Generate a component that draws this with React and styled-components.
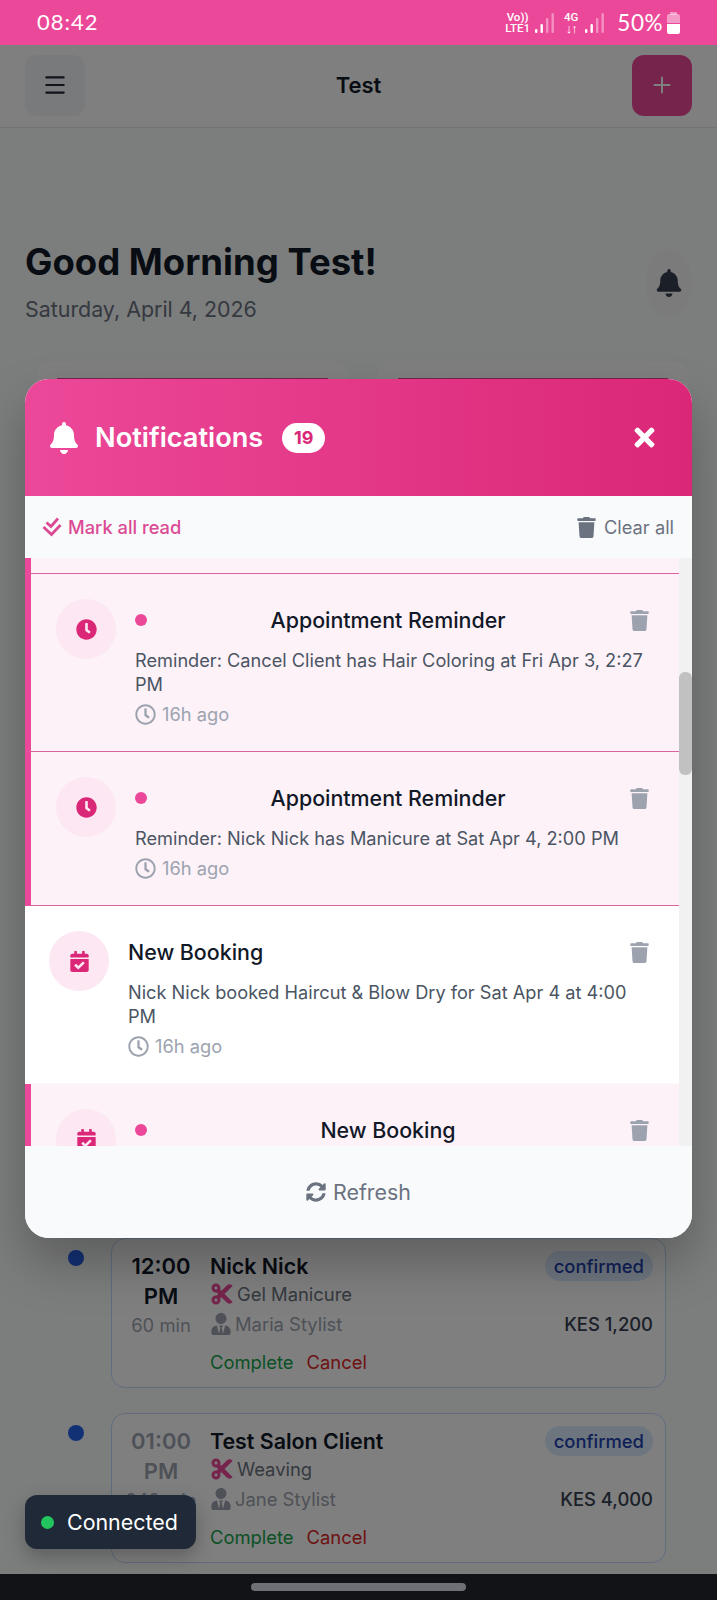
import React from "react";
import styled, { createGlobalStyle } from "styled-components";
import {
  FaBell, FaTimes, FaTrash, FaClock, FaRegClock,
  FaCalendarCheck, FaSyncAlt, FaCut, FaUserTie,
} from "react-icons/fa";
import { Menu, Plus } from "lucide-react";

const Global = createGlobalStyle`
  html, body { margin: 0; padding: 0; background: #fff; }
  * { box-sizing: border-box; }
  body { font-family: Inter, "Liberation Sans", sans-serif; }
`;

const Screen = styled.div`
  width: 717px; height: 1600px; display: flex; flex-direction: column; overflow: hidden;
`;
const StatusBar = styled.div`
  height: 45px; flex: none; background: #ec4899; color: #fff; display: flex;
  align-items: center; justify-content: space-between; padding: 0 36px 0 37px;
`;
const Clock = styled.span`
  font-family: Lato, sans-serif; font-size: 22px; font-weight: 400; letter-spacing: 1px;
  position: relative; top: -1px;
`;
const StatusRight = styled.div`display: flex; align-items: center;`;
const Stack = styled.div`
  display: flex; flex-direction: column; align-items: center; font-family: Roboto, sans-serif;
  font-weight: 500; font-size: 11.5px; line-height: 11px;
  margin: 0 ${(p) => p.$mr}px 0 ${(p) => p.$ml}px;
`;
const Arrows = styled.span`font-size: 13px; line-height: 11px; font-weight: 700; letter-spacing: -1px;`;
const Percent = styled.span`
  font-family: Lato, sans-serif; font-size: 22.5px; margin: 0 3px 0 12px; letter-spacing: .5px;
`;
const Viewport = styled.div`position: relative; flex: 1; overflow: hidden; background: #f9fafb;`;
const TopBar = styled.header`
  height: 83px; display: flex; align-items: center; justify-content: space-between;
  padding: 0 25px 2px; border-bottom: 1px solid #e5e7eb; background: #fff;
`;
const MenuButton = styled.div`
  width: 60px; height: 61px; border-radius: 12px; background: #f3f4f6; color: #1f2937;
  display: flex; align-items: center; justify-content: center;
`;
const AddButton = styled(MenuButton)`background: #ec4899; color: #fff;`;
const TopTitle = styled.div`font-size: 22px; font-weight: 600; color: #111827;`;
const Main = styled.main`padding: 112px 25px 0;`;
const Greeting = styled.section`display: flex; justify-content: space-between; align-items: center;`;
const Heading = styled.h1`margin: 0 0 13px; font-size: 36.5px; line-height: 44px; font-weight: 700; color: #111827;`;
const DateLine = styled.div`font-size: 21.4px; line-height: 24px; color: #6b7280;`;
const BellButton = styled.div`
  width: 46px; height: 68px; border-radius: 50%; background: #f6f7f8; color: #374151;
  display: flex; align-items: center; justify-content: center; font-size: 28px; margin-top: 4px;
`;
const StatGrid = styled.section`
  display: grid; grid-template-columns: 1fr 1fr; gap: 30px; padding: 0 4px 0 12px;
  margin: 41px 0 716px; height: 160px;
`;
const StatCard = styled.div`
  border-radius: 14px; background: #fff; padding: 16px 20px 0;
`;
const StatBar = styled.div`height: 3px; background: #ec4899;`;
const Timeline = styled.section`display: flex; flex-direction: column; gap: 25px; padding: 0 51px 0 68px;`;
const TimelineRow = styled.div`display: flex; gap: 27px; align-items: flex-start;`;
const TimelineDot = styled.span`
  width: 16px; height: 16px; flex: none; border-radius: 50%; background: #2563eb; margin-top: 12px;
`;
const ApptCard = styled.article`
  flex: 1; height: 150px; border: 1px solid #bfdbfe; border-radius: 14px; background: #fff;
  padding: 12px 12px 0 20px; display: flex; gap: 20px;
`;
const TimeCol = styled.div`width: 58px; flex: none; display: flex; flex-direction: column; align-items: center;`;
const TimeText = styled.div`
  font-size: 22px; line-height: 30px; font-weight: 600; color: ${(p) => (p.$past ? "#9ca3af" : "#111827")};
`;
const Duration = styled.div`font-size: 18.4px; line-height: 28px; color: #9ca3af; white-space: nowrap;`;
const ApptBody = styled.div`flex: 1; min-width: 0;`;
const Row = styled.div`display: flex; justify-content: space-between; align-items: center;`;
const ClientName = styled.div`font-size: 21.4px; line-height: 30px; font-weight: 600; color: #111827;`;
const Badge = styled.span`
  height: 30px; padding: 0 9px; border-radius: 15px; background: #dbeafe; color: #1e40af;
  font-size: 18.4px; line-height: 30px; font-weight: 500;
`;
const Service = styled.div`
  display: flex; align-items: center; gap: 3px; margin: -1px 0 1px; font-size: 18.4px; line-height: 28px; color: #6b7280;
  svg { color: #ec4899; font-size: 24px; }
`;
const Stylist = styled.div`
  display: flex; align-items: center; gap: 3px; font-size: 18.4px; line-height: 30px; color: #9ca3af;
  svg { font-size: 22px; }
`;
const Price = styled.span`font-size: 18.4px; font-weight: 500; color: #374151;`;
const Actions = styled.div`display: flex; gap: 13px; margin-top: 9px; font-size: 18.4px; line-height: 28px;`;
const Complete = styled.span`color: #16a34a;`;
const Cancel = styled.span`color: #dc2626;`;

const Overlay = styled.div`
  position: absolute; inset: 0; background: rgba(0,0,0,.5); display: flex;
  align-items: center; justify-content: center; padding: 0 25px;
`;
const Modal = styled.div`
  width: 100%; height: 859px; margin-bottom: 2px; border-radius: 24px; overflow: hidden; background: #fff;
  display: flex; flex-direction: column; box-shadow: 0 25px 50px rgba(0,0,0,.25);
`;
const ModalHeader = styled.div`
  height: 117px; flex: none; display: flex; align-items: center; padding: 0 33px 0 23px; color: #fff;
  background: linear-gradient(90deg, #ec4899, #db2777);
`;
const HeaderBell = styled.span`display: flex; font-size: 32px;`;
const ModalTitle = styled.h2`margin: 0 19px 0 15px; font-size: 27.2px; font-weight: 600;`;
const CountBadge = styled.span`
  width: 43px; height: 30px; border-radius: 15px; background: #fff; color: #db2777;
  font-size: 18px; font-weight: 700; display: flex; align-items: center; justify-content: center;
`;
const CloseIcon = styled.span`margin-left: auto; display: flex; font-size: 29px;`;
const Toolbar = styled.div`
  height: 62px; flex: none; background: #f9fafb; display: flex; align-items: center;
  justify-content: space-between; padding: 0 18px 0 17px; font-size: 18.3px; font-weight: 500;
`;
const MarkRead = styled.span`display: flex; align-items: center; gap: 6px; color: #db4a94;`;
const ClearAll = styled.span`
  display: flex; align-items: center; gap: 7px; color: #6b7280; font-weight: 400;
  svg { font-size: 21px; }
`;
const List = styled.div`position: relative; flex: 1; min-height: 0; overflow: hidden; padding-right: 13px;`;
const Track = styled.div`position: absolute; top: 0; right: 0; bottom: 0; width: 13px; background: #f1f1f1;`;
const Thumb = styled.div`
  position: absolute; top: 114px; right: 0; width: 13px; height: 103px; border-radius: 6px; background: #c1c1c1;
`;
const Item = styled.div`
  display: flex; gap: 19px; padding: 25px 25px 25px ${(p) => (p.$unread ? 25 : 24)}px;
  background: ${(p) => (p.$unread ? "#fdf2f8" : "#fff")};
  border-left: ${(p) => (p.$unread ? "6px solid #ec4899" : "none")};
  border-bottom: 1px solid ${(p) => (p.$unread ? "#d9629f" : "#f9fafb")};
`;
const PartialItem = styled.div`
  height: 16px; background: #fdf2f8; border-left: 6px solid #ec4899; border-bottom: 1px solid #d9629f;
`;
const IconCircle = styled.div`
  width: 60px; height: 60px; flex: none; border-radius: 50%; background: #fce7f3; color: #db2777;
  display: flex; align-items: center; justify-content: center; font-size: 21px;
`;
const ItemBody = styled.div`flex: 1; min-width: 0;`;
const TitleRow = styled.div`display: flex; align-items: center; height: 42px; margin-bottom: 7px;`;
const UnreadDot = styled.span`width: 12px; height: 12px; flex: none; border-radius: 50%; background: #ec4899; margin-right: 5px;`;
const ItemTitle = styled.div`
  flex: 1; font-size: 21.4px; font-weight: 500; color: #111827; text-align: ${(p) => (p.$unread ? "center" : "left")};
`;
const DeleteButton = styled.span`
  width: 30px; flex: none; display: flex; justify-content: center; color: #9ca3af; font-size: 21px;
`;
const Message = styled.p`margin: 0 0 6px; font-size: 18.2px; line-height: 24px; color: #4b5563;`;
const TimeAgo = styled.div`
  display: flex; align-items: center; gap: 6px; font-size: 18.3px; line-height: 24px; color: #9ca3af;
  svg { font-size: 21px; }
`;
const ModalFooter = styled.div`
  height: 92px; flex: none; background: #f9fafb; color: #6b7280; display: flex; align-items: center;
  justify-content: center; gap: 7px; font-size: 21.4px; svg { font-size: 20px; }
`;
const Toast = styled.div`
  position: absolute; left: 25px; top: 1450px; width: 171px; height: 54px; border-radius: 12px;
  background: #1f2937; color: #fff; display: flex; align-items: center; gap: 13px; padding-left: 16px;
  font-size: 21.4px; box-shadow: 0 8px 20px rgba(0,0,0,.25);
`;
const ToastDot = styled.span`width: 13px; height: 13px; border-radius: 50%; background: #22c55e;`;
const NavBar = styled.div`
  height: 26px; flex: none; background: #121317; display: flex; justify-content: center; padding-top: 9px;
`;
const NavPill = styled.div`width: 215px; height: 8px; border-radius: 4px; background: #6e7075;`;

const Signal = () => (
  <svg width="20" height="22" viewBox="0 0 20 22" aria-hidden="true">
    <rect x="0" y="17" width="2.4" height="4" rx="1" fill="#fff" />
    <rect x="5.5" y="12" width="2.4" height="9" rx="1" fill="#fff" />
    <rect x="11" y="6" width="2.4" height="15" rx="1" fill="#fff" opacity=".4" />
    <rect x="16.5" y="1" width="2.4" height="20" rx="1" fill="#fff" opacity=".4" />
  </svg>
);
const Battery = () => (
  <svg width="15" height="22" viewBox="0 0 15 22" aria-hidden="true">
    <rect x="4" y="0" width="7" height="3" fill="#fff" opacity=".45" />
    <path d="M1 4a2 2 0 0 1 2-2h9a2 2 0 0 1 2 2v7H1z" fill="#fff" opacity=".45" />
    <path d="M1 12h13v8a2 2 0 0 1-2 2H3a2 2 0 0 1-2-2z" fill="#fff" />
  </svg>
);
const DoubleCheck = () => (
  <svg width="20" height="20" viewBox="0 0 20 20" fill="none" stroke="currentColor" strokeWidth="2.8" aria-hidden="true">
    <path d="M4.5 5.5 L9 9.5 L16 1.5" />
    <path d="M1.5 10 L9.5 17.5 L18.5 8" />
  </svg>
);

const appts = [
  { time: "12:00", dur: "60 min", name: "Nick Nick", service: "Gel Manicure", stylist: "Maria Stylist", price: "KES 1,200" },
  { time: "01:00", dur: "240 min", name: "Test Salon Client", service: "Weaving", stylist: "Jane Stylist", price: "KES 4,000", past: true },
];

const notes = [
  { title: "Appointment Reminder", msg: "Reminder: Cancel Client has Hair Coloring at Fri Apr 3, 2:27 PM", unread: true, Icon: FaClock },
  { title: "Appointment Reminder", msg: "Reminder: Nick Nick has Manicure at Sat Apr 4, 2:00 PM", unread: true, Icon: FaClock },
  { title: "New Booking", msg: "Nick Nick booked Haircut & Blow Dry for Sat Apr 4 at 4:00 PM", unread: false, Icon: FaCalendarCheck },
  { title: "New Booking", msg: "Test Client booked Manicure for Sat Apr 4 at 5:00 PM", unread: true, Icon: FaCalendarCheck },
];

export default function App() {
  return (
    <Screen>
      <Global />
      <StatusBar>
        <Clock>08:42</Clock>
        <StatusRight>
          <Stack $ml={0} $mr={5}><span>Vo))</span><span>LTE1</span></Stack>
          <Signal />
          <Stack $ml={9} $mr={7}><span>4G</span><Arrows>↓↑</Arrows></Stack>
          <Signal />
          <Percent>50%</Percent>
          <Battery />
        </StatusRight>
      </StatusBar>
      <Viewport>
        <TopBar>
          <MenuButton><Menu size={26} strokeWidth={2} /></MenuButton>
          <TopTitle>Test</TopTitle>
          <AddButton><Plus size={26} strokeWidth={1.8} /></AddButton>
        </TopBar>
        <Main>
          <Greeting>
            <div>
              <Heading>Good Morning Test!</Heading>
              <DateLine>Saturday, April 4, 2026</DateLine>
            </div>
            <BellButton><FaBell /></BellButton>
          </Greeting>
          <StatGrid><StatCard><StatBar /></StatCard><StatCard><StatBar /></StatCard></StatGrid>
        </Main>
        <Timeline>
          {appts.map((a) => (
            <TimelineRow key={a.name}>
              <TimelineDot />
              <ApptCard>
                <TimeCol>
                  <TimeText $past={a.past}>{a.time}</TimeText>
                  <TimeText $past={a.past}>PM</TimeText>
                  <Duration>{a.dur}</Duration>
                </TimeCol>
                <ApptBody>
                  <Row><ClientName>{a.name}</ClientName><Badge>confirmed</Badge></Row>
                  <Service><FaCut />{a.service}</Service>
                  <Row><Stylist><FaUserTie />{a.stylist}</Stylist><Price>{a.price}</Price></Row>
                  <Actions><Complete>Complete</Complete><Cancel>Cancel</Cancel></Actions>
                </ApptBody>
              </ApptCard>
            </TimelineRow>
          ))}
        </Timeline>
        <Overlay>
          <Modal>
            <ModalHeader>
              <HeaderBell><FaBell /></HeaderBell>
              <ModalTitle>Notifications</ModalTitle>
              <CountBadge>19</CountBadge>
              <CloseIcon><FaTimes /></CloseIcon>
            </ModalHeader>
            <Toolbar>
              <MarkRead><DoubleCheck />Mark all read</MarkRead>
              <ClearAll><FaTrash />Clear all</ClearAll>
            </Toolbar>
            <List>
              <PartialItem />
              {notes.map((n, i) => (
                <Item key={i} $unread={n.unread}>
                  <IconCircle><n.Icon /></IconCircle>
                  <ItemBody>
                    <TitleRow>
                      {n.unread && <UnreadDot />}
                      <ItemTitle $unread={n.unread}>{n.title}</ItemTitle>
                      <DeleteButton><FaTrash /></DeleteButton>
                    </TitleRow>
                    <Message>{n.msg}</Message>
                    <TimeAgo><FaRegClock />16h ago</TimeAgo>
                  </ItemBody>
                </Item>
              ))}
              <Track><Thumb /></Track>
            </List>
            <ModalFooter><FaSyncAlt />Refresh</ModalFooter>
          </Modal>
        </Overlay>
        <Toast><ToastDot />Connected</Toast>
      </Viewport>
      <NavBar><NavPill /></NavBar>
    </Screen>
  );
}
